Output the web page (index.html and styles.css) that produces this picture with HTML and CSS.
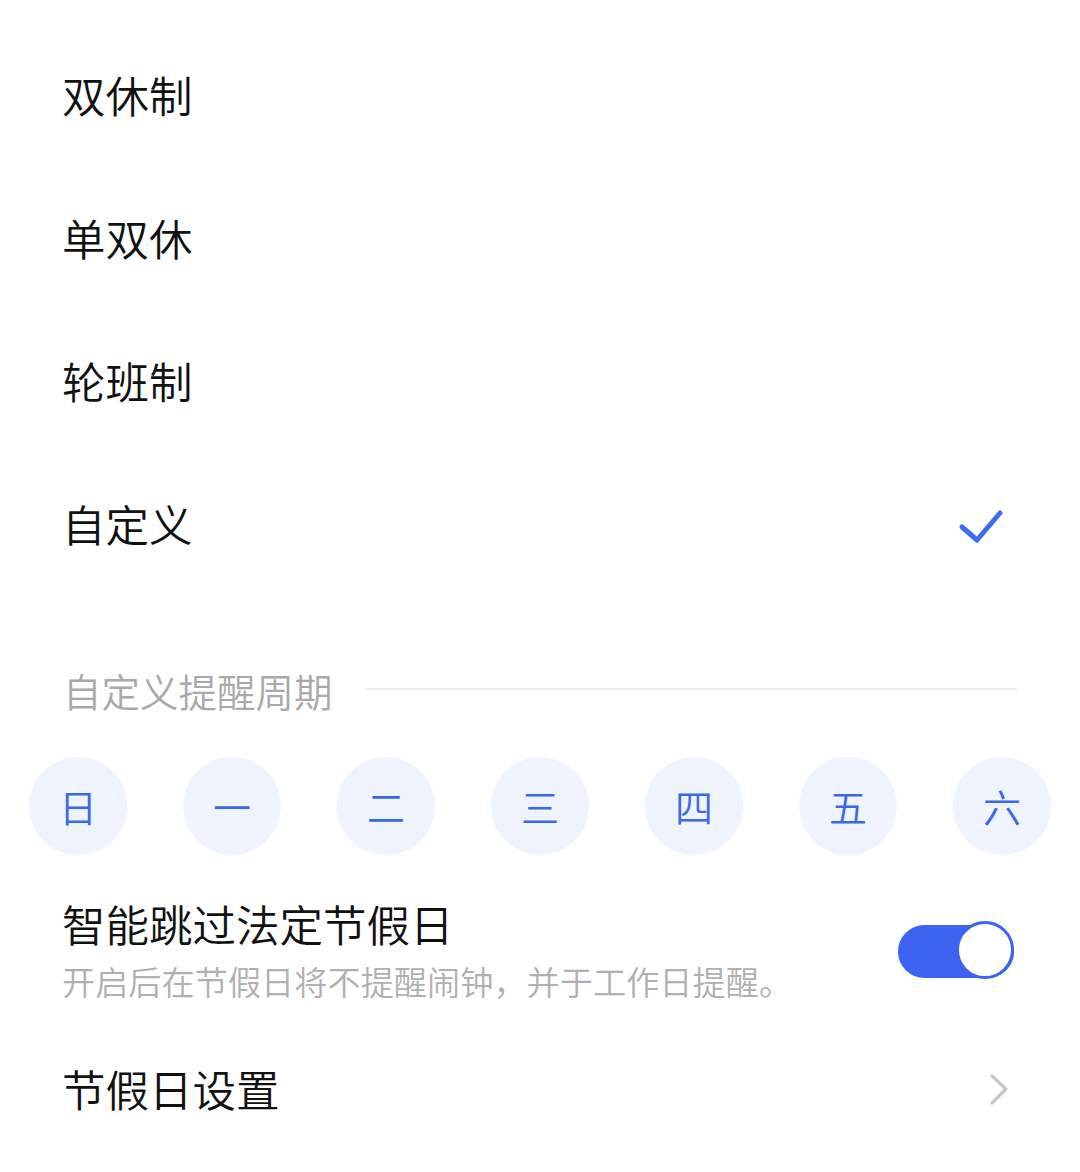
FILE: index.html
```html
<!DOCTYPE html>
<html lang="zh">
<head>
<meta charset="utf-8">
<link rel="stylesheet" href="styles.css">
</head>
<body>
<div class="page">
  <div class="options">
    <div class="option"><span class="label">双休制</span></div>
    <div class="option"><span class="label">单双休</span></div>
    <div class="option"><span class="label">轮班制</span></div>
    <div class="option selected">
      <span class="label">自定义</span>
      <svg class="check" width="48" height="40" viewBox="0 0 48 40"><path d="M6 23 L21 36 L44 9" fill="none" stroke="#3d6cf2" stroke-width="5" stroke-linecap="round" stroke-linejoin="round"/></svg>
    </div>
  </div>

  <div class="section-header">
    <span class="section-title">自定义提醒周期</span>
    <span class="section-line"></span>
  </div>

  <div class="days">
    <div class="day">日</div>
    <div class="day">一</div>
    <div class="day">二</div>
    <div class="day">三</div>
    <div class="day">四</div>
    <div class="day">五</div>
    <div class="day">六</div>
  </div>

  <div class="switch-row">
    <div class="switch-text">
      <div class="label">智能跳过法定节假日</div>
      <div class="desc">开启后在节假日将不提醒闹钟，并于工作日提醒。</div>
    </div>
    <div class="toggle"><span class="track"></span><span class="knob"></span></div>
  </div>

  <div class="nav-row">
    <span class="label">节假日设置</span>
    <svg class="chevron" width="26" height="38" viewBox="0 0 26 38"><path d="M6 6 L20 19 L6 33" fill="none" stroke="#c6c6c6" stroke-width="3.2" stroke-linecap="round" stroke-linejoin="round"/></svg>
  </div>
</div>
</body>
</html>
```
FILE: styles.css
```css
html, body {
  margin: 0;
  padding: 0;
  background: #ffffff;
}
body {
  font-family: "Noto Sans CJK SC", "Noto Sans", sans-serif;
  font-weight: 350;
  color: #111111;
}
.page {
  width: 1080px;
  height: 1172px;
  overflow: hidden;
}
.options {
  padding-top: 23px;
}
.option {
  height: 143px;
  display: flex;
  align-items: center;
  justify-content: space-between;
  padding-left: 62px;
  padding-right: 76px;
}
.label {
  font-size: 43.5px;
  line-height: 56px;
  color: #111111;
}
.section-header {
  margin-top: 70px;
  height: 50px;
  display: flex;
  align-items: center;
  padding-left: 63px;
  padding-right: 62px;
}
.section-title {
  font-size: 38.5px;
  line-height: 50px;
  color: #a9a9a9;
  white-space: nowrap;
}
.section-line {
  flex: 1;
  height: 2px;
  background: #efefef;
  margin-left: 32px;
  margin-bottom: 3px;
}
.days {
  margin-top: 42px;
  display: flex;
  gap: 56px;
  padding-left: 29px;
}
.day {
  width: 98px;
  height: 98px;
  border-radius: 50%;
  background: #eff3fd;
  color: #3b69e6;
  font-size: 38px;
  display: flex;
  align-items: center;
  justify-content: center;
  line-height: 1;
}
.switch-row {
  margin-top: 41px;
  display: flex;
  align-items: center;
  justify-content: space-between;
  padding-left: 62px;
  padding-right: 66px;
}
.switch-text {
  display: flex;
  flex-direction: column;
  gap: 7px;
}
.desc {
  font-size: 33.2px;
  line-height: 44px;
  color: #b0b0b0;
  white-space: nowrap;
}
.toggle {
  position: relative;
  width: 116px;
  height: 60px;
  margin-top: 2px;
}
.track {
  position: absolute;
  left: 0;
  top: 4px;
  width: 116px;
  height: 53px;
  border-radius: 27px;
  background: #3d63f2;
}
.knob {
  position: absolute;
  right: 0;
  top: 0;
  width: 52px;
  height: 52px;
  border: 3px solid #3d63f2;
  border-radius: 50%;
  background: #ffffff;
}
.nav-row {
  margin-top: 36px;
  height: 100px;
  display: flex;
  align-items: center;
  justify-content: space-between;
  padding-left: 62px;
  padding-right: 68px;
}
```
